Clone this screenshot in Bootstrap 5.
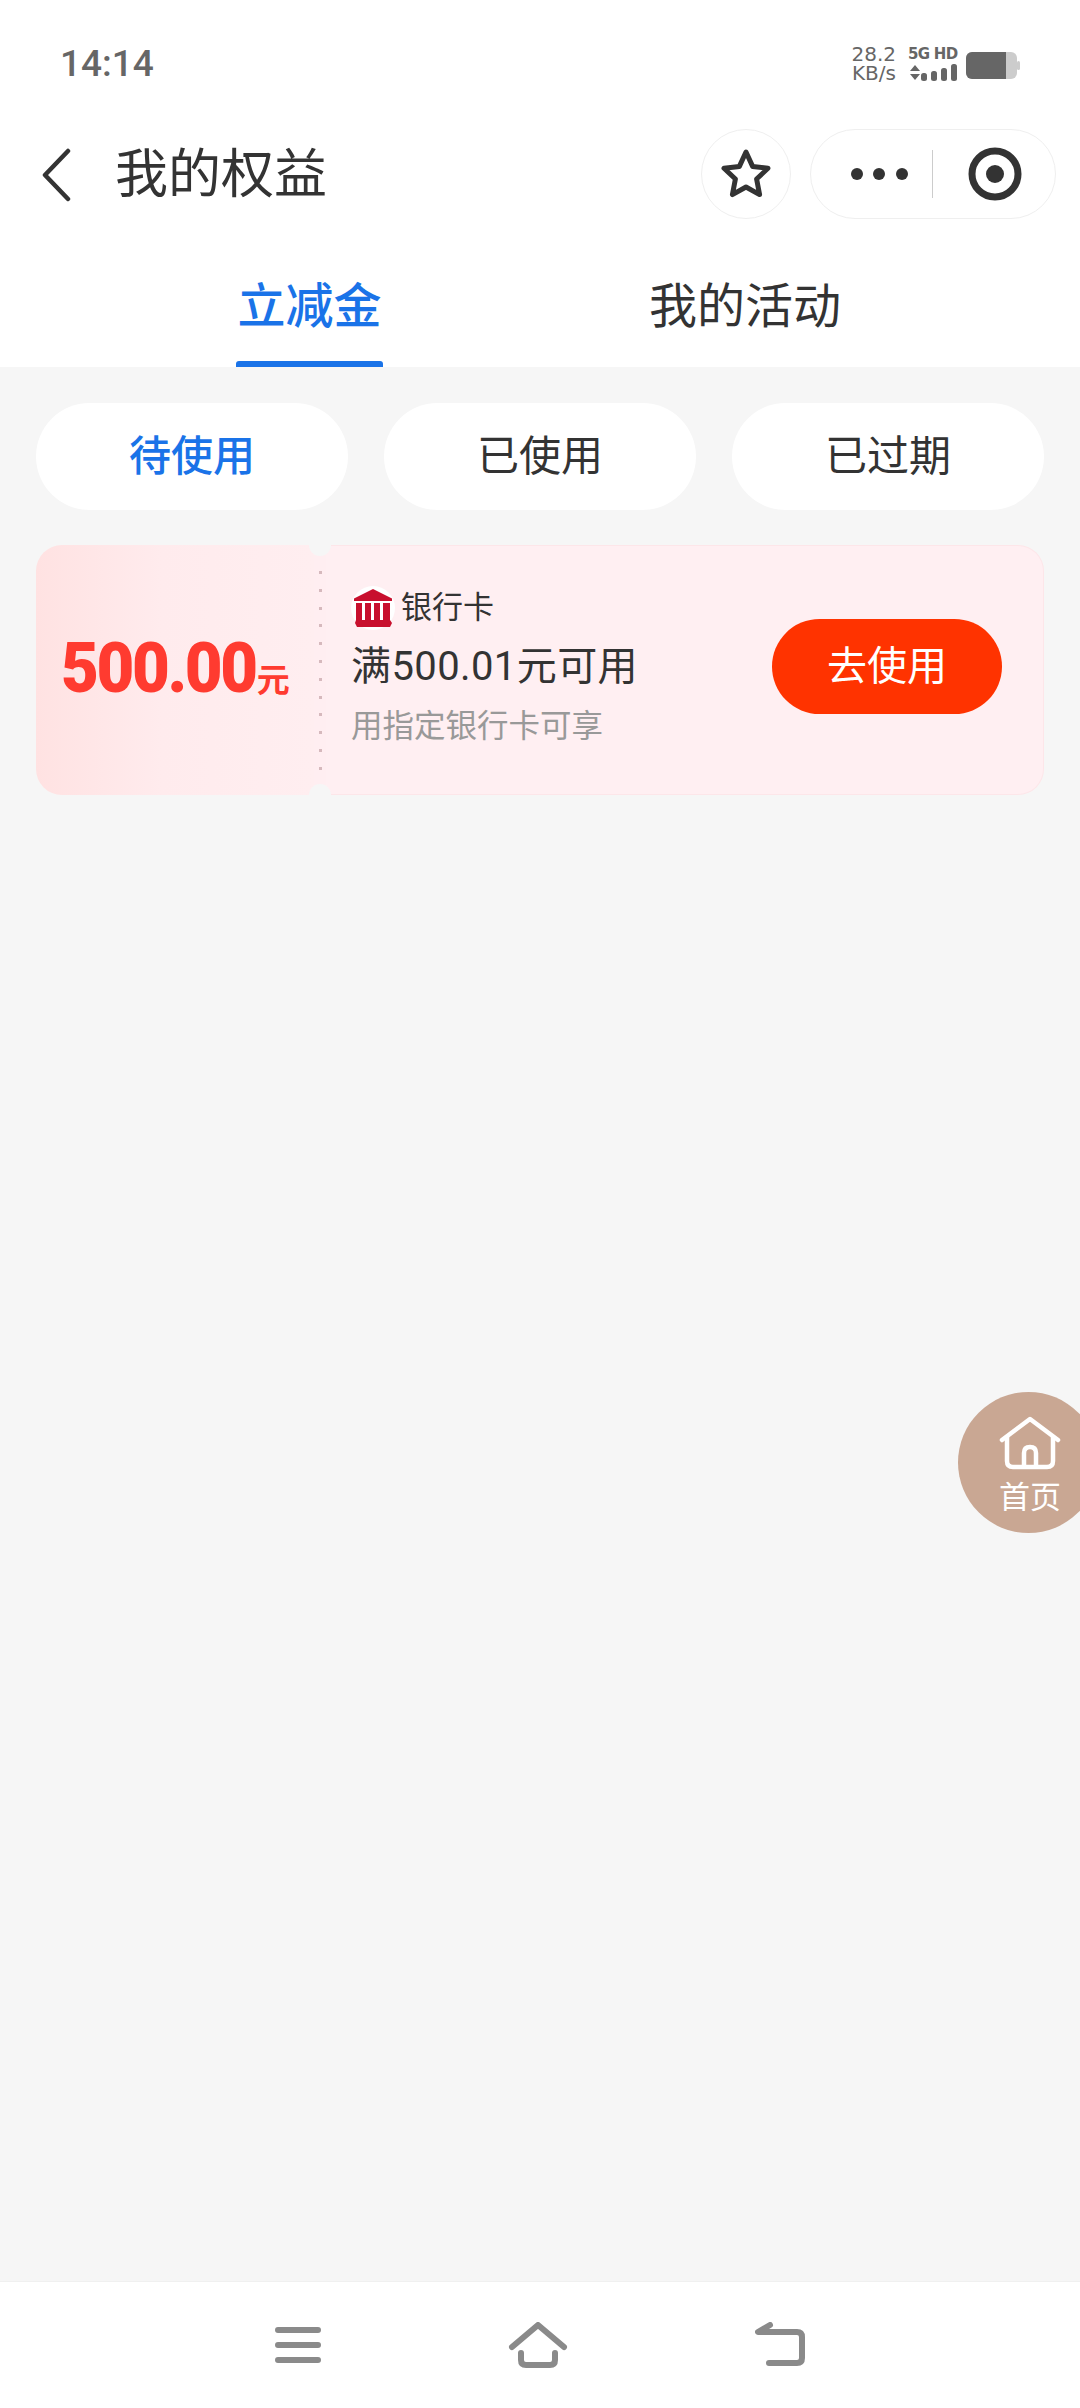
<!DOCTYPE html>
<html lang="zh-CN">
<head>
<meta charset="UTF-8">
<title>我的权益</title>
<link rel="stylesheet" href="https://cdn.jsdelivr.net/npm/bootstrap@5.3.0/dist/css/bootstrap.min.css">
<style>
html, body { margin: 0; height: 2408px; }
body { font-family: Roboto, "Noto Sans CJK SC", sans-serif; background: #f6f6f6; color: #333; width: 1080px; overflow: hidden; position: relative; }
.page-wrap { height: 2408px; }
.top-area { background: #fff; height: 367px; }
.status-row { height: 115px; padding: 0 62px 0 60px; }
.clock { font-size: 37px; font-weight: 500; color: #666; line-height: 1; margin-top: 45px; }
.status-right { margin-top: 45px; color: #666; }
.net-speed { font-family: "DejaVu Sans", sans-serif; font-size: 20px; line-height: 19px; text-align: right; width: 50px; }
.net-kind { font-family: "DejaVu Sans", sans-serif; font-size: 15px; font-weight: 700; letter-spacing: -.7px; line-height: 15px; margin-left: 12px; margin-top: 2px; width: 50px; white-space: nowrap; }
.kind-bars { margin-top: 2px; }
.batt-icon { margin-top: 7px; margin-right: -4px; }
.title-row { height: 112px; padding-left: 41px; }
.back-icon { flex: none; margin-top: 8px; }
.page-title { font-size: 53px; line-height: 1; margin-left: 44px; margin-top: 8px; }
.star-btn { width: 90px; height: 90px; border: 1px solid #efefef; border-radius: 50%; margin-left: auto; margin-top: 5px; }
.capsule { width: 246px; height: 90px; border: 1px solid #efefef; border-radius: 45px; margin-left: 19px; margin-right: 24px; margin-top: 5px; padding-left: 39px; }
.capsule-line { width: 1px; height: 48px; background: #ccc; margin-left: 24px; }
.scan-icon { margin-left: 35px; }
.tab-row { height: 140px; }
.tab-one { width: 147px; margin-left: 236px; color: #1a73e8; font-weight: 500; }
.tab-two { margin-left: 266px; }
.tab-txt { font-size: 48px; line-height: 1; padding-top: 56px; white-space: nowrap; }
.tab-bar { height: 6px; background: #1a73e8; border-radius: 3px 3px 0 0; margin-top: 30px; }
.pill-row { padding: 36px 36px 0; gap: 36px; }
.pill-item { width: 312px; height: 107px; border-radius: 54px; background: #fff; font-size: 42px; line-height: 1; }
.pill-on { color: #1a73e8; font-weight: 500; }
.coupon { margin: 35px 36px 0; height: 250px; }
.coupon-left { width: 278px; border-radius: 26px 0 0 26px; background: linear-gradient(90deg, #ffe2e2, #ffebed 45%, #ffeef0); padding-left: 25px; color: #ff3b30; white-space: nowrap; }
.amount { display: inline-block; font-size: 71px; font-weight: 900; letter-spacing: -2.6px; line-height: 1; transform: scaleX(.92); transform-origin: left center; margin-right: -16px; margin-bottom: 5px; }
.amount-unit { font-size: 33px; font-weight: 700; line-height: 1; margin-top: 20px; }
.coupon-sep { width: 12px; position: relative; background: #ffeef1; }
.coupon-sep::before, .coupon-sep::after { content: ""; position: absolute; left: -5px; width: 22px; height: 22px; border-radius: 50%; background: #f6f6f6; }
.coupon-sep::before { top: -11px; }
.coupon-sep::after { bottom: -11px; }
.dot-line { position: absolute; left: 5px; top: 26px; width: 3px; height: 200px; background: repeating-linear-gradient(180deg, #d6b9bd 0 3px, transparent 3px 17.8px); }
.coupon-right { flex: 1; background: #ffeff2; border: 1px solid #fde6e9; border-left: 0; border-radius: 0 26px 26px 0; padding: 0 41px 0 25px; }
.coupon-info { padding-bottom: 12px; }
.bank-logo { width: 44px; height: 44px; border-radius: 50%; background: #fff; }
.bank-name { font-size: 31px; line-height: 1; margin-left: 6px; }
.rule-txt { font-size: 40px; line-height: 1; margin-top: 17px; letter-spacing: .4px; white-space: nowrap; }
.rule-sub { font-size: 31.5px; line-height: 1; margin-top: 24px; color: #999; white-space: nowrap; }
.use-btn { width: 230px; height: 95px; border-radius: 48px; background: #ff3300; color: #fff; font-size: 40px; border: 0; padding: 0; margin-bottom: 7px; }
.home-float { position: absolute; left: 958px; top: 1392px; width: 141px; height: 141px; border-radius: 50%; background: #c9a793; color: #fff; padding-left: 41px; padding-top: 24px; }
.home-txt { font-size: 31px; line-height: 1; margin-top: 12px; white-space: nowrap; }
.sys-nav { height: 127px; background: #fff; margin-top: auto; border-top: 1px solid #f0f0f0; }
.sys-icons { gap: 187px; margin-top: -1px; margin-left: 0; }
</style>
</head>
<body>
<div class="page-wrap d-flex flex-column">
  <div class="top-area">
    <div class="status-row d-flex justify-content-between align-items-start">
      <div class="clock">14:14</div>
      <div class="status-right d-flex align-items-start">
        <div class="net-speed">28.2<br>KB/s</div>
        <div class="net-kind">5G HD
          <svg class="kind-bars d-block" width="50" height="18" viewBox="0 0 50 18" fill="#666"><path d="M2 7l5-6 5 6zM2 10h10l-5 6z"/><rect x="13" y="9" width="6" height="8" rx="2.5"/><rect x="23" y="7" width="6" height="10" rx="2.5"/><rect x="33" y="4" width="6" height="13" rx="2.5"/><rect x="43" y="0" width="6" height="17" rx="2.5"/></svg>
        </div>
        <svg class="batt-icon ms-2" width="56" height="28" viewBox="0 0 56 28"><rect x="0" y="0" width="51" height="27" rx="6" fill="#ccc"/><path d="M6 0h34v27H6a6 6 0 0 1-6-6V6a6 6 0 0 1 6-6z" fill="#666"/><rect x="51" y="9" width="3" height="9" rx="1.5" fill="#ccc"/></svg>
      </div>
    </div>
    <div class="title-row d-flex align-items-center">
      <svg class="back-icon" width="30" height="54" viewBox="0 0 30 54" fill="none" stroke="#333" stroke-width="4.5" stroke-linecap="round" stroke-linejoin="round"><path d="M27 3L4 27l23 24"/></svg>
      <div class="page-title">我的权益</div>
      <div class="star-btn d-flex align-items-center justify-content-center">
        <svg width="52" height="52" viewBox="0 0 52 52" fill="none" stroke="#333" stroke-width="5" stroke-linejoin="round"><path d="M26 4l6.6 14.4 15.400 1.900-11.400 10.700 3 15.600L26 39l-13.600 7.600 3-15.600L4 20.300l15.400-1.900z"/></svg>
      </div>
      <div class="capsule d-flex align-items-center">
        <svg width="58" height="14" viewBox="0 0 58 14" fill="#333"><circle cx="7" cy="7" r="6"/><circle cx="29" cy="7" r="6"/><circle cx="52" cy="7" r="6"/></svg>
        <div class="capsule-line"></div>
        <svg class="scan-icon" width="54" height="54" viewBox="0 0 54 54" fill="none"><circle cx="27" cy="27" r="23" stroke="#333" stroke-width="7"/><circle cx="27" cy="27" r="9" fill="#333"/></svg>
      </div>
    </div>
    <div class="tab-row d-flex">
      <div class="tab-one"><div class="tab-txt text-center">立减金</div><div class="tab-bar"></div></div>
      <div class="tab-two"><div class="tab-txt">我的活动</div></div>
    </div>
  </div>

  <div class="pill-row d-flex">
    <div class="pill-item pill-on d-flex align-items-center justify-content-center">待使用</div>
    <div class="pill-item d-flex align-items-center justify-content-center">已使用</div>
    <div class="pill-item d-flex align-items-center justify-content-center">已过期</div>
  </div>

  <div class="coupon d-flex">
    <div class="coupon-left d-flex align-items-center">
      <span class="amount">500.00</span><span class="amount-unit">元</span>
    </div>
    <div class="coupon-sep"><div class="dot-line"></div></div>
    <div class="coupon-right d-flex align-items-center justify-content-between">
      <div class="coupon-info">
        <div class="d-flex align-items-center">
          <div class="bank-logo d-flex align-items-center justify-content-center">
            <svg width="40" height="38" viewBox="0 0 40 38" fill="#c8102e"><path d="M20 0l19 9.500V12H1V9.500z"/><path d="M3 14h6v17h3V14h6v17h3V14h6v17h3V14h7v17l2 3-2 4H4l-2-4 1-3z"/></svg>
          </div>
          <div class="bank-name">银行卡</div>
        </div>
        <div class="rule-txt">满500.01元可用</div>
        <div class="rule-sub">用指定银行卡可享</div>
      </div>
      <button class="use-btn" type="button">去使用</button>
    </div>
  </div>

  <div class="sys-nav d-flex align-items-center justify-content-center">
    <div class="sys-icons d-flex align-items-center">
      <svg width="46" height="38" viewBox="0 0 46 38" fill="none" stroke="#8a8a8a" stroke-width="6" stroke-linecap="round"><path d="M3 4h40M3 19h40M3 34h40"/></svg>
      <svg width="60" height="46" viewBox="0 0 60 46" fill="none" stroke="#8a8a8a" stroke-width="6" stroke-linecap="round" stroke-linejoin="round"><path d="M4 25L30 3l26 22"/><path d="M13 31v7q0 5 5 5h24q5 0 5-5v-7"/></svg>
      <svg width="50" height="46" viewBox="0 0 50 46" fill="none" stroke="#8a8a8a" stroke-width="6" stroke-linecap="round" stroke-linejoin="round"><path d="M15 3L3 10h39q5 0 5 5v21q0 5-5 5H14"/></svg>
    </div>
  </div>
</div>

<div class="home-float">
  <svg class="d-block" width="62" height="54" viewBox="0 0 62 54" fill="none" stroke="#fff" stroke-width="4.5" stroke-linecap="round" stroke-linejoin="round"><path d="M3 24L31 3l28 21"/><path d="M8 21v24q0 6 6 6h34q6 0 6-6V21"/><path d="M25 50V37q0-6 6-6t6 6v13"/></svg>
  <div class="home-txt">首页</div>
</div>
<script src="https://cdn.jsdelivr.net/npm/bootstrap@5.3.0/dist/js/bootstrap.bundle.min.js"></script>
</body>
</html>
